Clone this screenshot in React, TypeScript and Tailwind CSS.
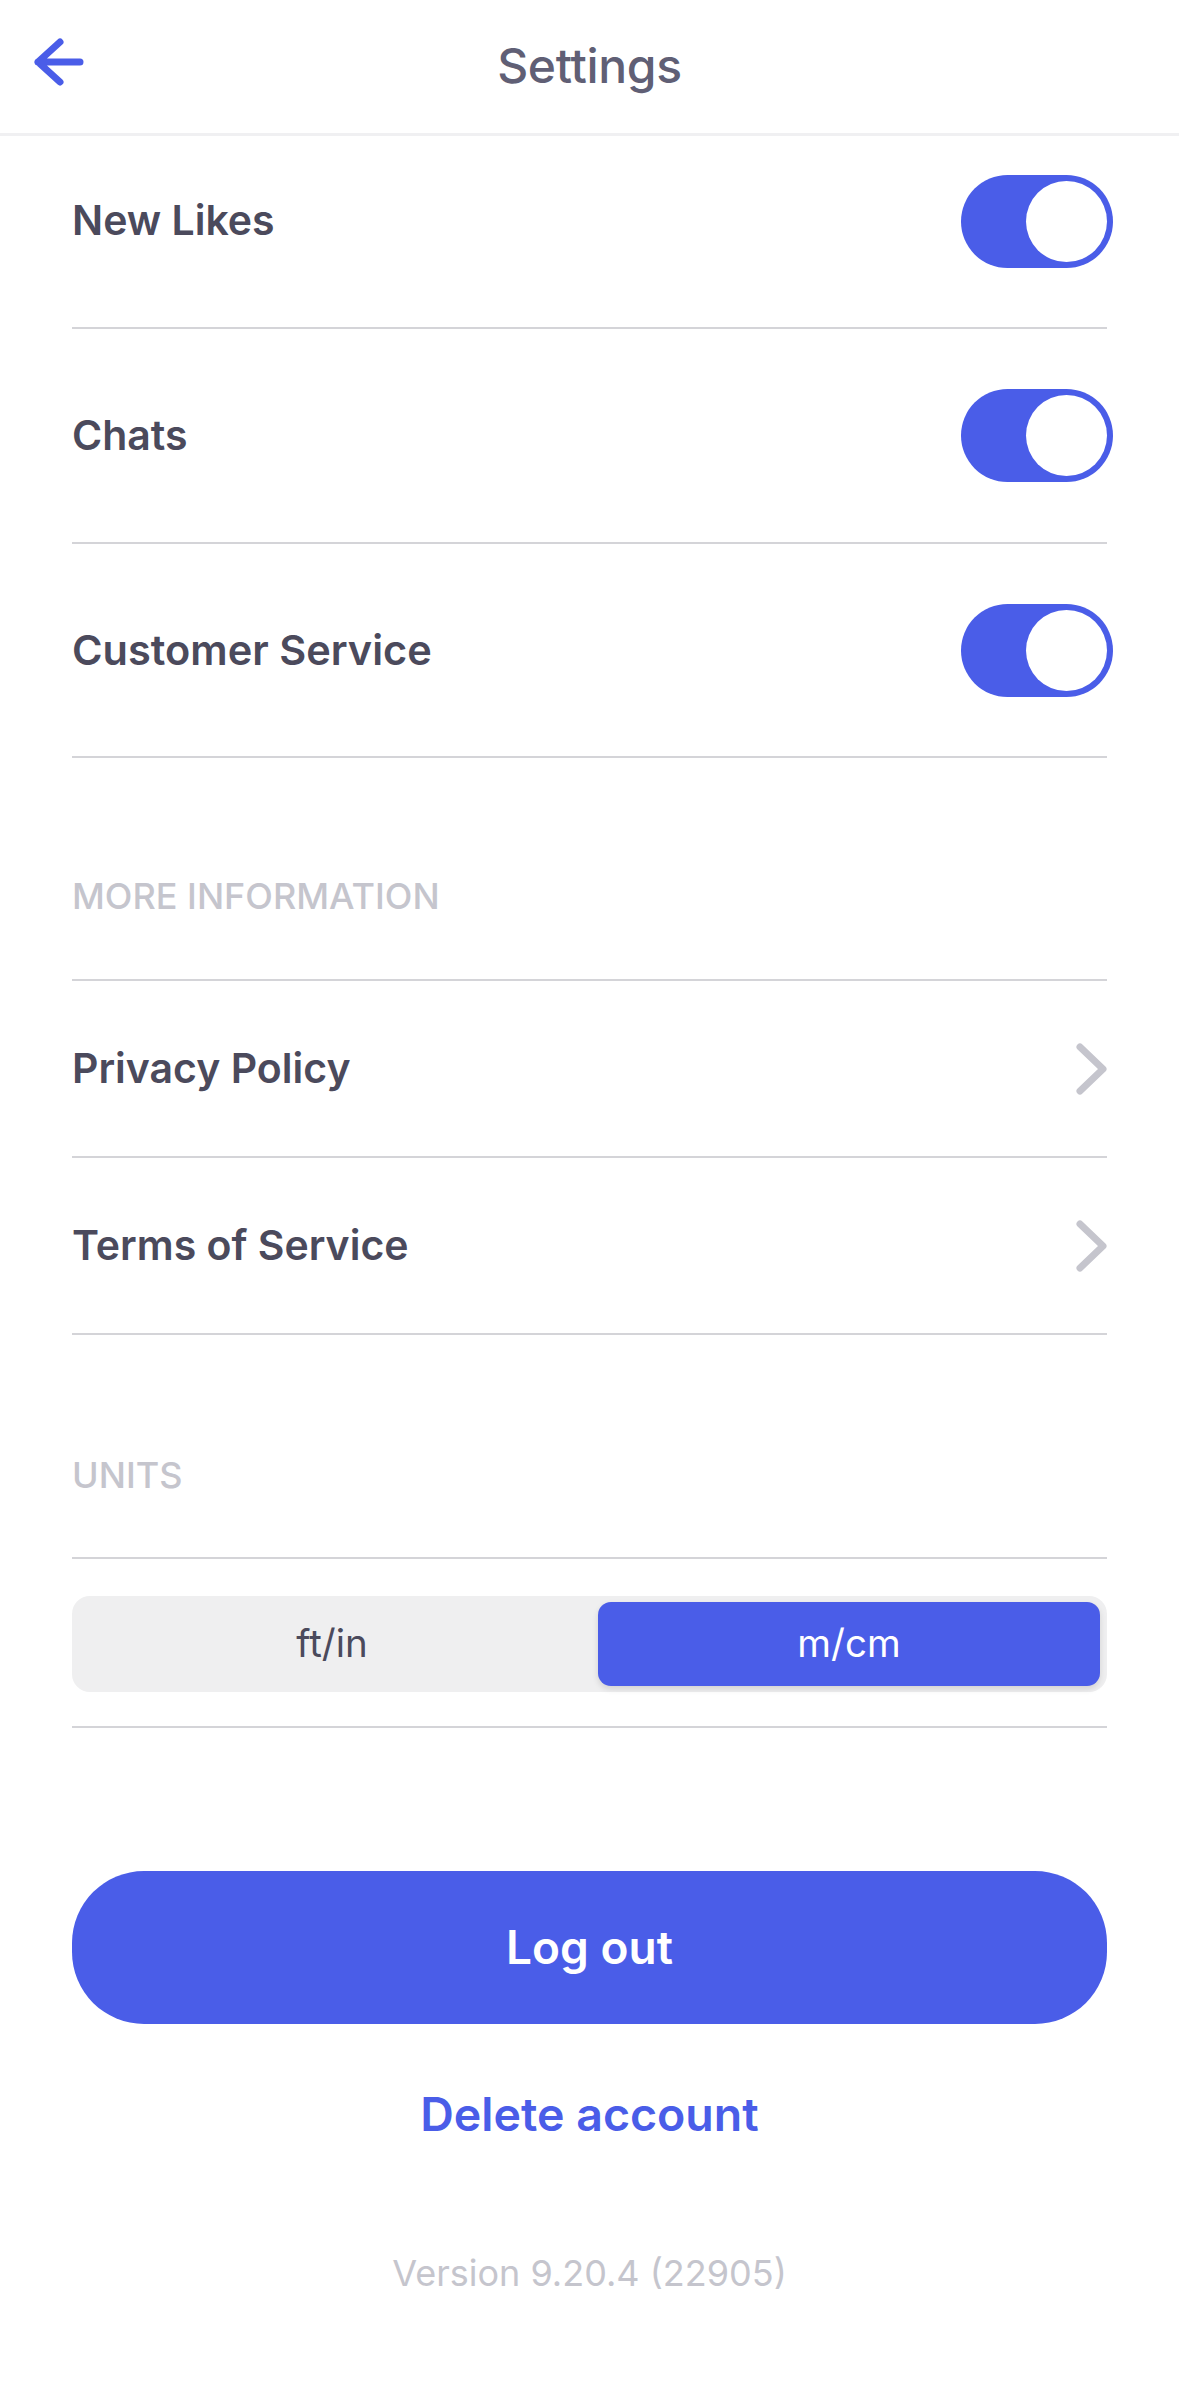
import React from "react";

const BLUE = "#4a5de8";

function Toggle() {
  return (
    <div className="-mr-[6px] w-[152px] h-[93px] rounded-full bg-[#4a5de8] flex items-center justify-end pr-[6px]">
      <div className="w-[81px] h-[81px] rounded-full bg-white" />
    </div>
  );
}

function Chevron() {
  return (
    <svg width="36" height="60" viewBox="0 0 36 60" fill="none">
      <path d="M9 8 L32 30 L9 52" stroke="#c5c5cd" strokeWidth="7" strokeLinecap="round" strokeLinejoin="round" />
    </svg>
  );
}

export default function App() {
  return (
    <div className="w-[1179px] min-h-[2396px] bg-white font-['Inter',sans-serif] text-[#4b4a5c]">
      {/* Header */}
      <div className="relative h-[136px] border-b-[3px] border-[#f0f0f2] flex items-center justify-center">
        <div className="absolute left-[30px] top-[34px]">
          <svg width="56" height="56" viewBox="0 0 56 56" fill="none">
            <path d="M30 8 L8 28 L30 48 M8 28 H50" stroke={BLUE} strokeWidth="7" strokeLinecap="round" strokeLinejoin="round" />
          </svg>
        </div>
        <div className="text-[48px] font-medium text-[#605f75] leading-none -mt-[1px] tracking-[-0.3px]">Settings</div>
      </div>

      <div className="px-[72px]">
        {/* Toggle rows */}
        <div className="h-[193px] border-b-2 border-[#d4d4d8] flex items-center justify-between pb-[21px]">
          <span className="text-[41px] font-semibold">New Likes</span>
          <Toggle />
        </div>
        <div className="h-[215px] border-b-2 border-[#d4d4d8] flex items-center justify-between">
          <span className="text-[41px] font-semibold">Chats</span>
          <Toggle />
        </div>
        <div className="h-[214px] border-b-2 border-[#d4d4d8] flex items-center justify-between">
          <span className="text-[41.5px] font-semibold">Customer Service</span>
          <Toggle />
        </div>

        {/* More information */}
        <div className="pt-[116px] pb-[61px] border-b-2 border-[#d4d4d8]">
          <div className="text-[36px] leading-[44px] font-medium text-[#c5c5cd]">MORE INFORMATION</div>
        </div>
        <div className="h-[177px] border-b-2 border-[#d4d4d8] flex items-center justify-between">
          <span className="text-[41px] font-semibold">Privacy Policy</span>
          <Chevron />
        </div>
        <div className="h-[177px] border-b-2 border-[#d4d4d8] flex items-center justify-between">
          <span className="text-[41px] font-semibold">Terms of Service</span>
          <Chevron />
        </div>

        {/* Units */}
        <div className="pt-[118px] pb-[60px] border-b-2 border-[#d4d4d8]">
          <div className="text-[36px] leading-[44px] font-medium text-[#c5c5cd]">UNITS</div>
        </div>
        <div className="pt-[37px] pb-[34px] border-b-2 border-[#d4d4d8]">
          <div className="h-[96px] rounded-[18px] bg-[#efeff0] flex p-[6px] pr-[7px]">
            <div className="flex-1 flex items-center justify-center pr-[12px] text-[38.5px] text-[#4b4a5c]">ft/in</div>
            <div className="w-[502px] rounded-[13px] bg-[#4a5de8] shadow-[0_3px_6px_rgba(0,0,0,0.12)] flex items-center justify-center text-[38.5px] text-white">m/cm</div>
          </div>
        </div>

        {/* Buttons */}
        <div className="mt-[143px] h-[153px] rounded-[72px] bg-[#4a5de8] flex items-center justify-center">
          <span className="text-[46px] font-semibold text-white">Log out</span>
        </div>
        <div className="mt-[61px] h-[60px] flex items-center justify-center">
          <span className="text-[46.5px] font-semibold text-[#4a5de8]">Delete account</span>
        </div>
        <div className="mt-[103px] h-[50px] flex items-center justify-center">
          <span className="text-[36px] text-[#c5c5cd]">Version 9.20.4 (22905)</span>
        </div>
      </div>
    </div>
  );
}
